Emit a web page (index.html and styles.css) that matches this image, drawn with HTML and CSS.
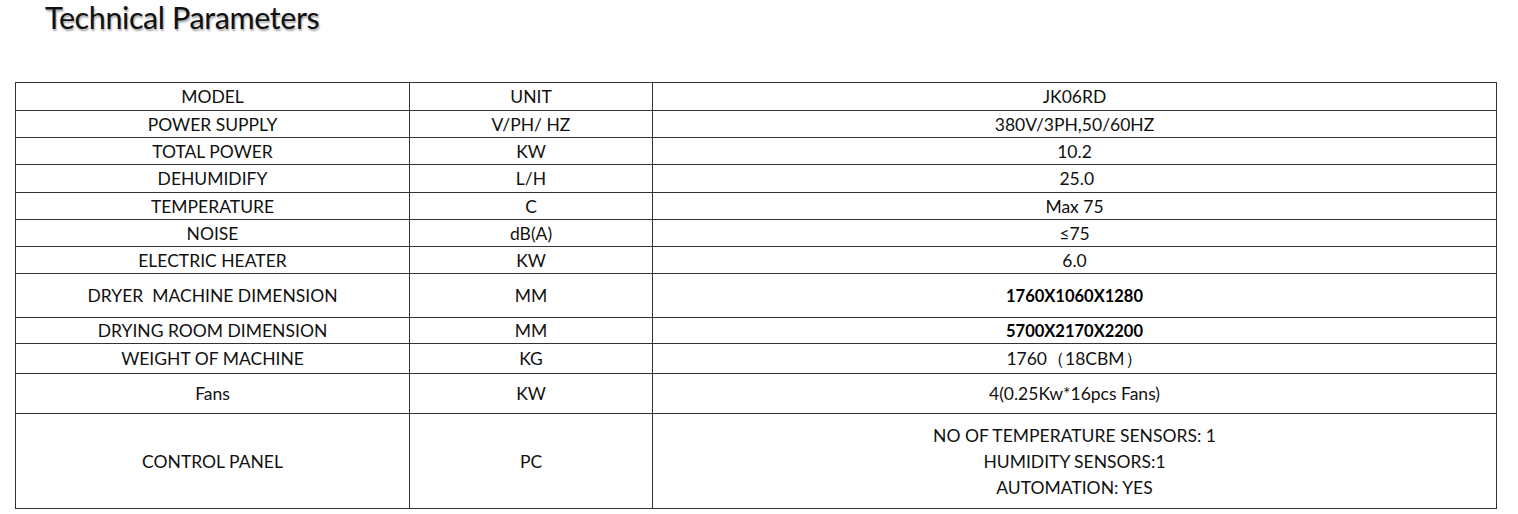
FILE: index.html
```html
<!DOCTYPE html>
<html>
<head>
<meta charset="utf-8">
<link rel="stylesheet" href="styles.css">
</head>
<body>
<h1 class="title">Technical Parameters</h1>
<table class="params">
  <colgroup><col class="c1"><col class="c2"><col class="c3"></colgroup>
  <tr class="h28"><td>MODEL</td><td>UNIT</td><td>JK06RD</td></tr>
  <tr class="h27"><td>POWER SUPPLY</td><td>V/PH/ HZ</td><td>380V/3PH,50/60HZ</td></tr>
  <tr class="h27"><td>TOTAL POWER</td><td>KW</td><td>10.2</td></tr>
  <tr class="h28"><td>DEHUMIDIFY</td><td>L/H</td><td>&nbsp;25.0</td></tr>
  <tr class="h27"><td>TEMPERATURE</td><td>C</td><td>Max 75</td></tr>
  <tr class="h27"><td>NOISE</td><td>dB(A)</td><td>≤75</td></tr>
  <tr class="h27"><td>ELECTRIC HEATER</td><td>KW</td><td>6.0</td></tr>
  <tr class="h44"><td>DRYER&nbsp; MACHINE DIMENSION</td><td>MM</td><td class="strong">1760X1060X1280</td></tr>
  <tr class="h26"><td>DRYING ROOM DIMENSION</td><td>MM</td><td class="strong">5700X2170X2200</td></tr>
  <tr class="h30"><td>WEIGHT OF MACHINE</td><td>KG</td><td>1760（18CBM）</td></tr>
  <tr class="h40"><td>Fans</td><td>KW</td><td>4(0.25Kw*16pcs Fans)</td></tr>
  <tr class="h95"><td>CONTROL PANEL</td><td>PC</td><td class="multi">NO OF TEMPERATURE SENSORS: 1<br>HUMIDITY SENSORS:1<br>AUTOMATION: YES</td></tr>
</table>
</body>
</html>
```
FILE: styles.css
```css
html, body {
  margin: 0;
  padding: 0;
  background: #fff;
}
body {
  font-family: Lato, "Open Sans", "Liberation Sans", sans-serif;
  color: #111;
}
.title {
  margin: 0;
  padding: 0 0 0 45px;
  font-family: Lato, "Open Sans", sans-serif;
  font-weight: 400;
  font-size: 30.5px;
  line-height: 34px;
  height: 34px;
  color: #111;
  text-shadow: 1px 2px 2px rgba(0,0,0,0.35);
  letter-spacing: -0.4px;
}
.params {
  margin: 48px 0 0 15px;
  border-collapse: collapse;
  table-layout: fixed;
  width: 1481px;
}
.c1 { width: 394px; }
.c2 { width: 243px; }
.c3 { width: 844px; }
.params td {
  border: 1px solid #333;
  padding: 1px 0 0;
  text-align: center;
  vertical-align: middle;
  font-size: 17.5px;
  line-height: 20px;
  color: #111;
}
.h26 td { height: 24px; }
.h27 td { height: 25px; }
.h28 td { height: 26px; }
.h30 td { height: 28px; }
.h40 td { height: 38px; }
.h44 td { height: 42px; }
.h95 td { height: 93px; }
.params td.strong {
  font-size: 16.5px;
  font-weight: 700;
  color: #000;
}
.params td.multi {
  line-height: 26px;
}
```
